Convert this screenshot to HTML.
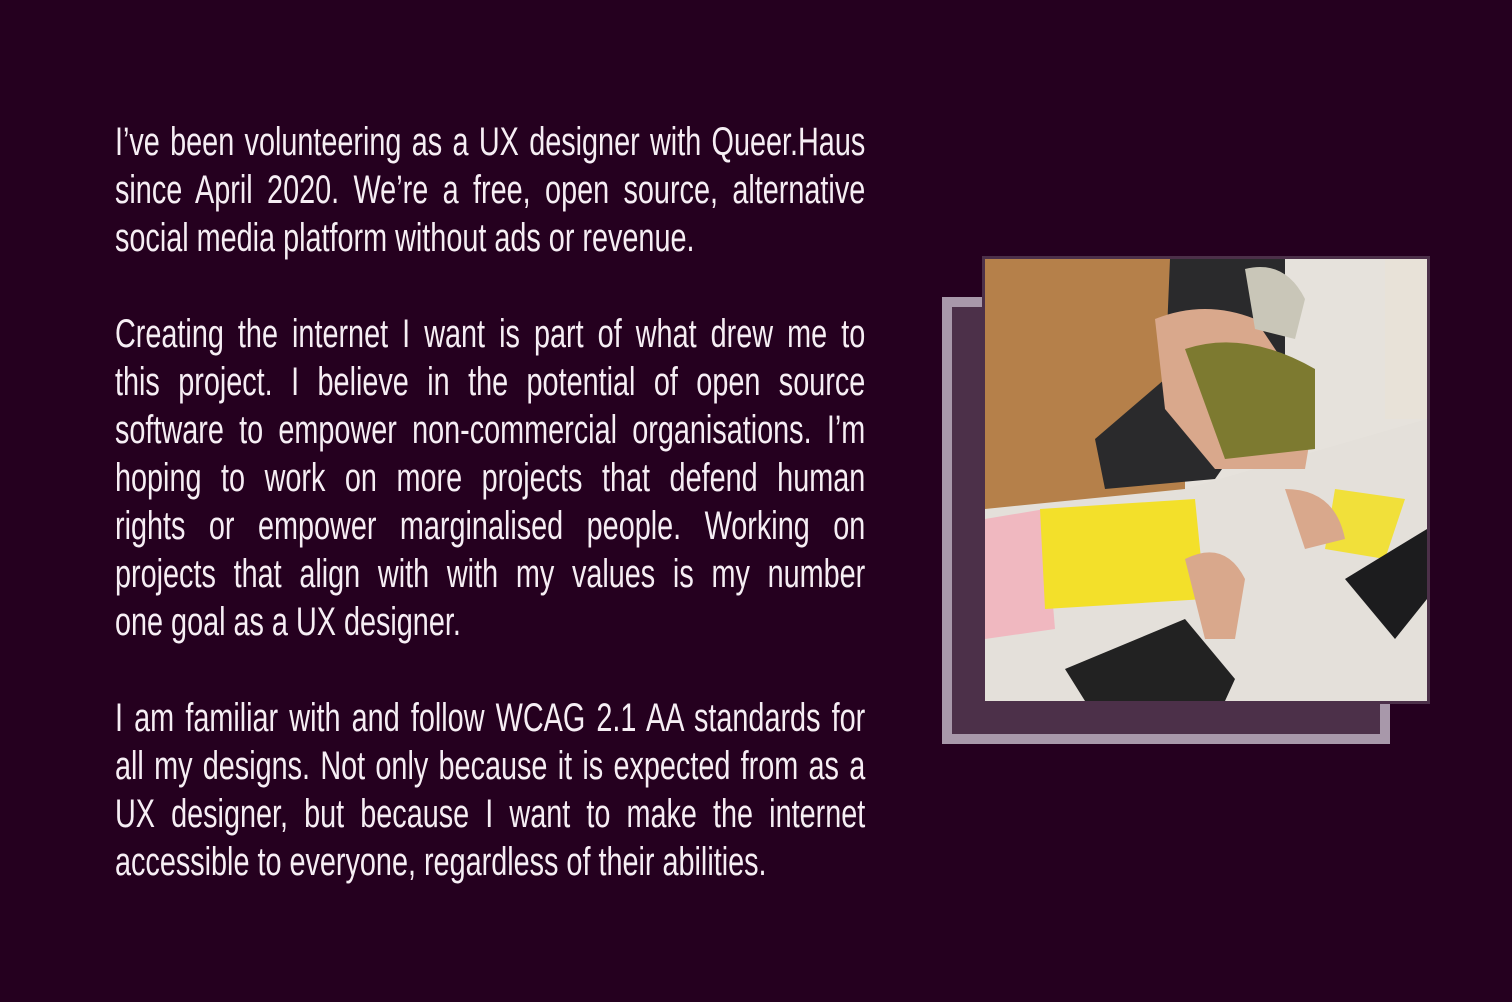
<!DOCTYPE html>
<html><head><style>
html,body{margin:0;padding:0;background:#25001f;width:1512px;height:1002px;overflow:hidden}
.txt{position:absolute;left:115px;top:118px;width:1042px;transform:scaleX(0.72);transform-origin:0 0;font-family:"Liberation Sans Narrow","Liberation Sans",sans-serif;font-size:40px;line-height:48px;color:#f6eef4}
.l{text-align:justify;text-align-last:justify;white-space:nowrap;height:48px}
.l.e{text-align-last:left}
.gap{height:48px}
.back{position:absolute;left:942px;top:297px;width:428px;height:427px;border:10px solid #a898aa;background:#4c3049}
.photo{position:absolute;left:982px;top:256px;width:442px;height:442px;border:3px solid #4c3049;overflow:hidden;background:#e6e2dc}
</style></head><body>
<div class="txt">
<div class="l">I’ve been volunteering as a UX designer with Queer.Haus</div>
<div class="l">since April 2020. We’re a free, open source, alternative</div>
<div class="l e">social media platform without ads or revenue.</div>
<div class="gap"></div>
<div class="l">Creating the internet I want is part of what drew me to</div>
<div class="l">this project. I believe in the potential of open source</div>
<div class="l">software to empower non-commercial organisations. I’m</div>
<div class="l">hoping to work on more projects that defend human</div>
<div class="l">rights or empower marginalised people. Working on</div>
<div class="l">projects that align with with my values is my number</div>
<div class="l e">one goal as a UX designer.</div>
<div class="gap"></div>
<div class="l">I am familiar with and follow WCAG 2.1 AA standards for</div>
<div class="l">all my designs. Not only because it is expected from as a</div>
<div class="l">UX designer, but because I want to make the internet</div>
<div class="l e">accessible to everyone, regardless of their abilities.</div>
</div>
<div class="back"></div>
<div class="photo">
<svg width="442" height="442" viewBox="0 0 442 442">
<rect x="0" y="0" width="200" height="250" fill="#b5804a"/>
<rect x="400" y="0" width="42" height="160" fill="#e8e2d8"/>
<path d="M185 0 L300 0 L300 120 L230 220 L120 230 L110 180 L180 120 Z" fill="#2a2a2c"/>
<path d="M0 250 L200 230 L442 160 L442 442 L0 442 Z" fill="#e4e0da"/>
<path d="M170 60 Q220 40 270 60 L330 150 L320 210 L230 210 L180 150 Z" fill="#d9a88c"/>
<path d="M200 90 Q260 70 330 110 L330 190 L240 200 Z" fill="#7d7a30"/>
<path d="M260 10 Q300 0 320 40 L310 80 L270 70 Z" fill="#c9c6b8"/>
<path d="M0 260 L60 250 L70 370 L0 380 Z" fill="#f0b8c0"/>
<path d="M55 250 L210 240 L220 340 L60 350 Z" fill="#f3e02a"/>
<path d="M350 230 L420 240 L400 300 L340 290 Z" fill="#f1e03a"/>
<path d="M360 320 L442 270 L442 340 L410 380 Z" fill="#1c1c1e"/>
<path d="M80 410 L200 360 L250 420 L240 442 L100 442 Z" fill="#222"/>
<path d="M200 300 Q240 280 260 320 L250 380 L220 380 Z" fill="#d9a88c"/>
<path d="M300 230 Q350 230 360 280 L320 290 Z" fill="#d9a88c"/>
</svg>
</div>
</body></html>
